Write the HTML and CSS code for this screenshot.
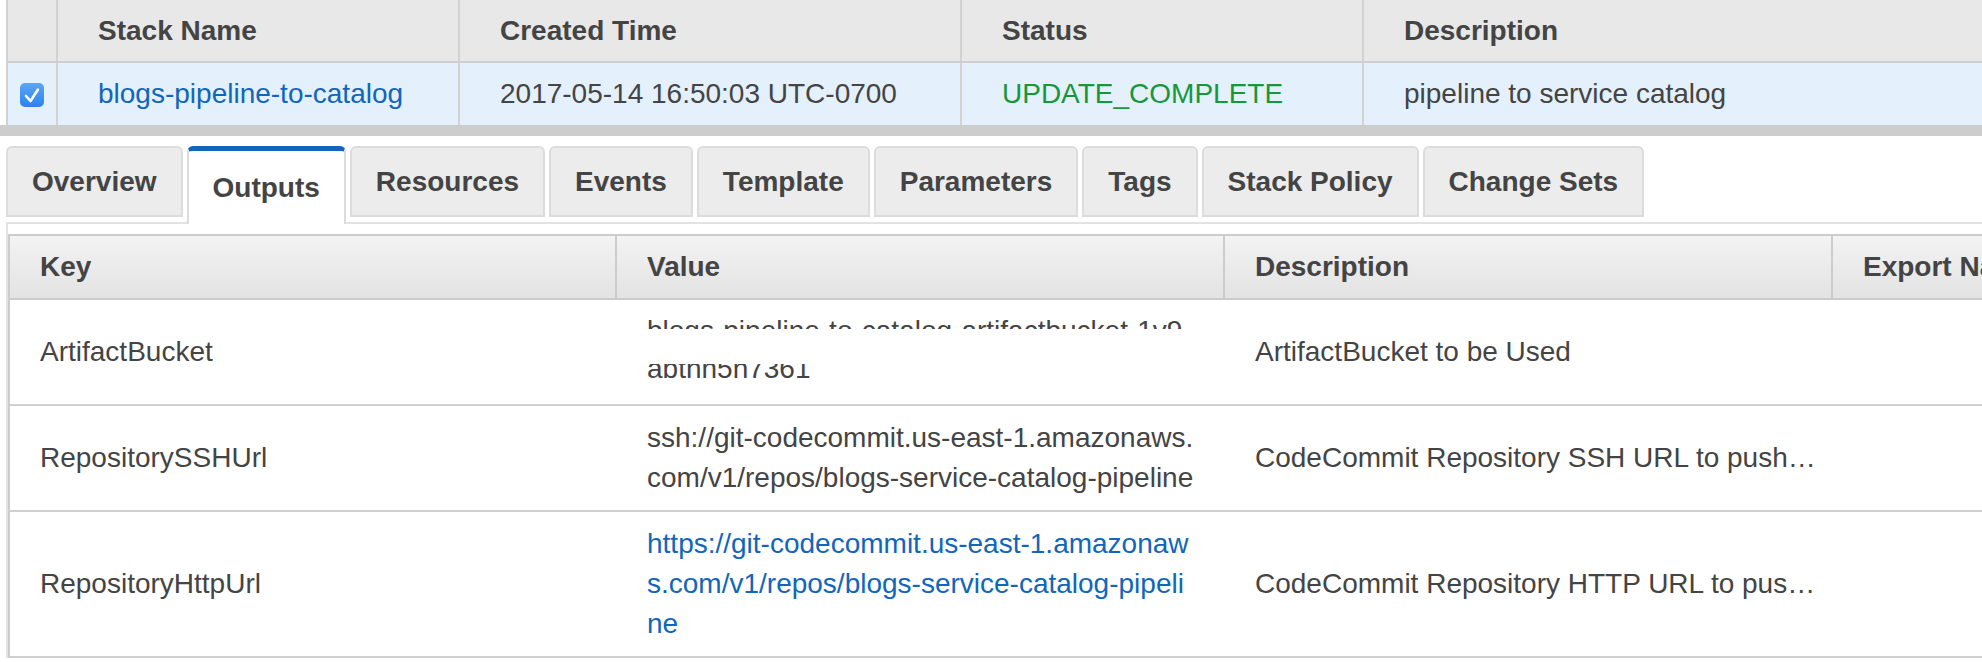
FILE: index.html
```html
<!DOCTYPE html>
<html>
<head>
<meta charset="utf-8">
<title>Stacks</title>
<link rel="stylesheet" href="styles.css">
</head>
<body>
<div class="stacks">
  <div class="srow shead">
    <div class="sc cbcol"></div>
    <div class="sc">Stack Name</div>
    <div class="sc">Created Time</div>
    <div class="sc">Status</div>
    <div class="sc last">Description</div>
  </div>
  <div class="srow ssel">
    <div class="sc cbcol">
      <span class="check"><svg width="24" height="24" viewBox="0 0 24 24"><polyline points="6,13 10.5,18 18,6.5" fill="none" stroke="#fff" stroke-width="2.6" stroke-linecap="round" stroke-linejoin="round"/></svg></span>
    </div>
    <div class="sc"><a class="link">blogs-pipeline-to-catalog</a></div>
    <div class="sc">2017-05-14 16:50:03 UTC-0700</div>
    <div class="sc status">UPDATE_COMPLETE</div>
    <div class="sc last">pipeline to service catalog</div>
  </div>
</div>
<div class="divider"></div>

<div class="tabs">
  <div class="tab">Overview</div>
  <div class="tab active">Outputs</div>
  <div class="tab">Resources</div>
  <div class="tab">Events</div>
  <div class="tab">Template</div>
  <div class="tab">Parameters</div>
  <div class="tab">Tags</div>
  <div class="tab">Stack Policy</div>
  <div class="tab">Change Sets</div>
</div>

<div class="panel">
  <div class="outputs">
    <div class="orow ohead">
      <div class="oc">Key</div>
      <div class="oc">Value</div>
      <div class="oc">Description</div>
      <div class="oc">Export Name</div>
    </div>
    <div class="orow">
      <div class="oc">ArtifactBucket</div>
      <div class="oc val">
        <div class="cut">
          <div class="cut1"><div>blogs-pipeline-to-catalog-artifactbucket-1v9</div></div>
          <div class="cut2"><div>abthn5n7361</div></div>
        </div>
      </div>
      <div class="oc desc">ArtifactBucket to be Used</div>
      <div class="oc"></div>
    </div>
    <div class="orow">
      <div class="oc">RepositorySSHUrl</div>
      <div class="oc val">ssh://git-codecommit.us-east-1.amazonaws.com/v1/repos/blogs-service-catalog-pipeline</div>
      <div class="oc desc">CodeCommit Repository SSH URL to push changes to</div>
      <div class="oc"></div>
    </div>
    <div class="orow">
      <div class="oc">RepositoryHttpUrl</div>
      <div class="oc val"><a class="link">https://git-codecommit.us-east-1.amazonaws.com/v1/repos/blogs-service-catalog-pipeline</a></div>
      <div class="oc desc">CodeCommit Repository HTTP URL to push changes to</div>
      <div class="oc"></div>
    </div>
  </div>
</div>
</body>
</html>
```

FILE: styles.css
```css
* { box-sizing: border-box; }

body {
  margin: 0;
  width: 1982px;
  height: 662px;
  overflow: hidden;
  background: #fff;
  color: #444;
  font-family: "Liberation Sans", Arial, Helvetica, sans-serif;
  font-size: 28px;
}

.link { color: #1166bb; text-decoration: none; }

/* ---- stack list ---- */
.stacks {
  margin-left: 6px;
  border-left: 2px solid #d2d2d2;
}

.srow {
  display: grid;
  grid-template-columns: 50px 402px 502px 402px 1fr;
}

.shead {
  height: 63px;
  background: #e8e8e8;
  border-bottom: 2px solid #cfcfcf;
  font-weight: bold;
}

.ssel {
  height: 62px;
  background: #e4f0fc;
}

.sc {
  display: flex;
  align-items: center;
  padding-left: 40px;
  border-right: 2px solid #d2d2d2;
  white-space: nowrap;
  overflow: hidden;
}

.sc.last { border-right: none; }

.sc.cbcol {
  padding-left: 0;
  justify-content: center;
}

.check {
  display: block;
  width: 24px;
  height: 24px;
  margin-top: 2px;
  border-radius: 5px;
  background: linear-gradient(#5aa6f8, #2b82f0);
}

.check svg { display: block; }

.status { color: #16983a; }

.divider {
  height: 11px;
  background: #cdcdcd;
}

/* ---- tabs ---- */
.tabs {
  display: flex;
  align-items: flex-start;
  gap: 4px;
  height: 76px;
  margin: 10px 0 0 6px;
}

.tab {
  height: 71px;
  padding: 0 24px;
  display: flex;
  align-items: center;
  background: #ececec;
  border: 2px solid #dcdcdc;
  border-radius: 6px 6px 0 0;
  font-weight: bold;
  white-space: nowrap;
}

.tab.active {
  position: relative;
  z-index: 1;
  height: 78px;
  margin-bottom: -2px;
  background: #fff;
  border-top: 5px solid #1166bb;
  border-bottom: none;
}

/* ---- panel ---- */
.panel {
  margin-left: 6px;
  padding-top: 10px;
  border-left: 2px solid #e2e2e2;
  border-top: 2px solid #e2e2e2;
}

.outputs {
  width: 2440px;
  border-left: 2px solid #cccccc;
  border-top: 2px solid #cccccc;
}

.orow {
  display: grid;
  grid-template-columns: 607px 608px 608px 608px;
  align-items: center;
  border-bottom: 2px solid #d0d0d0;
}

.oc {
  padding: 12px 28px 12px 30px;
  line-height: 40px;
}

.ohead {
  height: 64px;
  align-items: stretch;
  background: linear-gradient(#f3f3f3, #e3e3e3);
  border-bottom-color: #cccccc;
  font-weight: bold;
}

.ohead .oc {
  display: flex;
  align-items: center;
  padding-top: 0;
  padding-bottom: 0;
  border-right: 2px solid #cccccc;
  white-space: nowrap;
}

.val { word-break: break-all; }

.desc {
  padding-right: 12px;
  white-space: nowrap;
  overflow: hidden;
  text-overflow: ellipsis;
}

/* partly rendered value in first row */
.cut {
  display: flex;
  flex-direction: column;
  height: 80px;
}

.cut1 {
  margin-top: 8px;
  height: 9px;
  overflow: hidden;
  flex: none;
}

.cut1 > div {
  margin-top: -9px;
  white-space: nowrap;
}

.cut2 {
  margin-top: 35px;
  height: 16px;
  overflow: hidden;
  flex: none;
}

.cut2 > div { margin-top: -15px; }
```
